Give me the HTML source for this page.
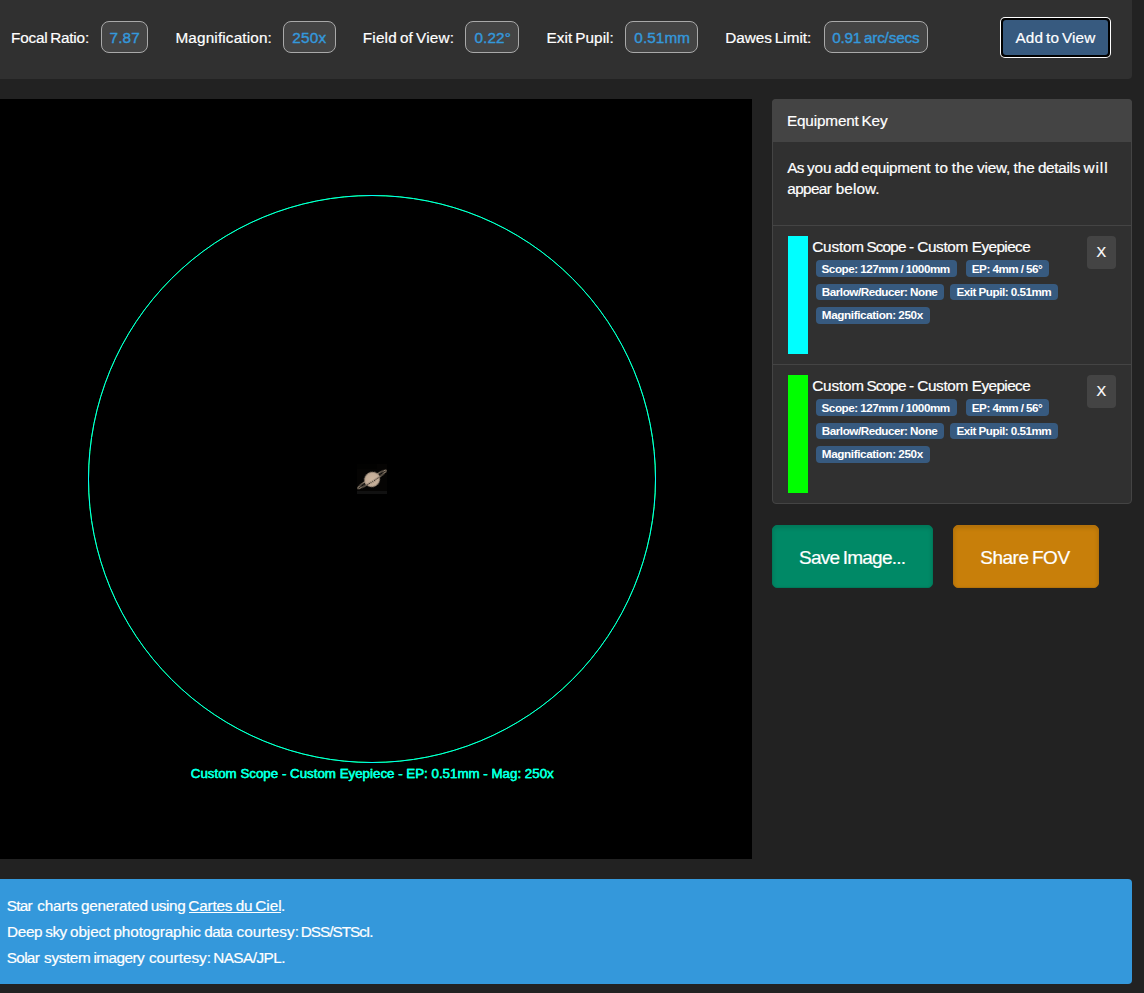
<!DOCTYPE html>
<html lang="en">
<head>
<meta charset="utf-8">
<title>Field of View Calculator</title>
<style>
html,body{margin:0;padding:0;}
body{width:1144px;height:993px;background:#222;position:relative;overflow:hidden;font-family:"Liberation Sans", sans-serif;}
.b{position:absolute;box-sizing:content-box;}
.t{position:absolute;white-space:nowrap;line-height:20px;word-spacing:-1.3px;-webkit-text-stroke:0.2px currentColor;}
svg{position:absolute;left:0;top:99px;}
</style>
</head>
<body>
<div class="b" style="left:0px;top:0px;width:1132px;height:79px;background:#303030;border-radius:0 0 4px 0;"></div>
<div class="b" style="left:101px;top:21px;width:45px;height:30px;background:#444;border:1px solid #a9a9a9;border-radius:8px;"></div>
<div class="b" style="left:283px;top:21px;width:51px;height:30px;background:#444;border:1px solid #a9a9a9;border-radius:8px;"></div>
<div class="b" style="left:465px;top:21px;width:52px;height:30px;background:#444;border:1px solid #a9a9a9;border-radius:8px;"></div>
<div class="b" style="left:625px;top:21px;width:71px;height:30px;background:#444;border:1px solid #a9a9a9;border-radius:8px;"></div>
<div class="b" style="left:824px;top:21px;width:102px;height:30px;background:#444;border:1px solid #a9a9a9;border-radius:8px;"></div>
<div class="b" style="left:1000px;top:17px;width:111px;height:41px;background:#fff;border-radius:5px;"></div>
<div class="b" style="left:1001px;top:18px;width:109px;height:39px;background:#000;border-radius:4px;"></div>
<div class="b" style="left:1003px;top:20px;width:105px;height:35px;background:#375a7f;border-radius:3px;"></div>
<div class="b" style="left:0px;top:99px;width:752px;height:760px;background:#000;"></div>
<div class="b" style="left:772px;top:99px;width:358px;height:403px;background:#303030;border:1px solid #444;border-radius:4px;"></div>
<div class="b" style="left:772px;top:99px;width:360px;height:43px;background:#444;border-radius:4px 4px 0 0;"></div>
<div class="b" style="left:773px;top:225px;width:358px;height:1px;background:#444;"></div>
<div class="b" style="left:773px;top:364px;width:358px;height:1px;background:#444;"></div>
<div class="b" style="left:788px;top:236px;width:20px;height:118px;background:#00ffff;"></div>
<div class="b" style="left:1087px;top:236px;width:29px;height:33px;background:#444;border-radius:4px;"></div>
<div class="b" style="left:816px;top:260px;width:141px;height:17px;background:#375a7f;border-radius:4px;"></div>
<div class="b" style="left:966px;top:260px;width:83px;height:17px;background:#375a7f;border-radius:4px;"></div>
<div class="b" style="left:816px;top:284px;width:128px;height:16px;background:#375a7f;border-radius:4px;"></div>
<div class="b" style="left:950px;top:284px;width:108px;height:16px;background:#375a7f;border-radius:4px;"></div>
<div class="b" style="left:816px;top:307px;width:114px;height:17px;background:#375a7f;border-radius:4px;"></div>
<div class="b" style="left:788px;top:375px;width:20px;height:118px;background:#00ff00;"></div>
<div class="b" style="left:1087px;top:375px;width:29px;height:33px;background:#444;border-radius:4px;"></div>
<div class="b" style="left:816px;top:399px;width:141px;height:17px;background:#375a7f;border-radius:4px;"></div>
<div class="b" style="left:966px;top:399px;width:83px;height:17px;background:#375a7f;border-radius:4px;"></div>
<div class="b" style="left:816px;top:423px;width:128px;height:16px;background:#375a7f;border-radius:4px;"></div>
<div class="b" style="left:950px;top:423px;width:108px;height:16px;background:#375a7f;border-radius:4px;"></div>
<div class="b" style="left:816px;top:446px;width:114px;height:17px;background:#375a7f;border-radius:4px;"></div>
<div class="b" style="left:772px;top:525px;width:159px;height:61px;background:#008966;border-radius:5px;border:1px solid #007a5a;box-shadow:inset 0 2px 4px rgba(0,0,0,.13);"></div>
<div class="b" style="left:953px;top:525px;width:144px;height:61px;background:#c87f0a;border-radius:5px;border:1px solid #b5720a;box-shadow:inset 0 2px 4px rgba(0,0,0,.13);"></div>
<div class="b" style="left:0px;top:879px;width:1132px;height:105px;background:#3498db;border-radius:0 4px 4px 0;"></div>
<div class="b" style="left:189px;top:912px;width:92px;height:1px;background:#fff;"></div>
<svg width="752" height="760" viewBox="0 0 752 760">
<defs>
<filter id="bl" x="-20%" y="-20%" width="140%" height="140%"><feGaussianBlur stdDeviation="0.42"/></filter>
<radialGradient id="pg" cx="50%" cy="50%" r="50%"><stop offset="0" stop-color="#cdb59e"/><stop offset="0.8" stop-color="#c3ac97"/><stop offset="1" stop-color="#a3917f"/></radialGradient>
<clipPath id="sc"><rect x="357" y="365" width="30" height="30"/></clipPath>
</defs>
<g fill="none" stroke-width="1">
<circle cx="372" cy="380" r="283.5" stroke="#00ff00"/>
<circle cx="372" cy="380" r="283.5" stroke="#00ffff"/>
</g>
<g font-family="'Liberation Sans', sans-serif" font-size="13.33" text-anchor="middle" stroke-width="0.3">
<text x="372.25" y="678.9" fill="#00ff00" stroke="#00ff00">Custom Scope - Custom Eyepiece - EP: 0.51mm - Mag: 250x</text>
<text x="372.25" y="678.9" fill="#00ffff" stroke="#00ffff">Custom Scope - Custom Eyepiece - EP: 0.51mm - Mag: 250x</text>
</g>
<rect x="357" y="365" width="30" height="30" fill="#050403"/>
<rect x="357" y="365" width="20" height="5" fill="#020201"/>
<rect x="357" y="391.9" width="30" height="3.1" fill="#111111"/>
<g clip-path="url(#sc)"><g filter="url(#bl)" transform="rotate(-32.3 372 380.3)">
<ellipse cx="372" cy="380.4" rx="17.3" ry="2.1" fill="#0c0907" stroke="#9f8f7c" stroke-width="0.95"/>
<ellipse cx="372" cy="380.5" rx="8.1" ry="7.5" fill="url(#pg)"/>
<path d="M364.6 382.3 A17.3 2.1 0 0 0 379.4 382.3" stroke="#0b0806" stroke-width="1.3" stroke-dasharray="1.2 0.9" fill="none"/>
<path d="M364.4 381.1 A17.3 2.1 0 0 0 379.6 381.1" stroke="#dcc4ab" stroke-width="0.8" fill="none" opacity="0.35"/>
</g></g>
</svg>

<span class="t" id="t0" style="left:10.99px;top:28.00px;font-size:15.3px;font-weight:400;color:#fff;letter-spacing:-0.197px;">Focal Ratio:</span>
<span class="t" id="t1" style="left:109.59px;top:28.00px;font-size:15.3px;font-weight:400;color:#3498db;letter-spacing:0.129px;-webkit-text-stroke-width:0.4px;">7.87</span>
<span class="t" id="t2" style="left:175.44px;top:28.00px;font-size:15.3px;font-weight:400;color:#fff;letter-spacing:0.158px;">Magnification:</span>
<span class="t" id="t3" style="left:292.22px;top:28.00px;font-size:15.3px;font-weight:400;color:#3498db;letter-spacing:0.263px;-webkit-text-stroke-width:0.4px;">250x</span>
<span class="t" id="t4" style="left:362.83px;top:28.00px;font-size:15.3px;font-weight:400;color:#fff;letter-spacing:0.163px;">Field of View:</span>
<span class="t" id="t5" style="left:474.45px;top:28.00px;font-size:15.3px;font-weight:400;color:#3498db;letter-spacing:0.114px;-webkit-text-stroke-width:0.4px;">0.22°</span>
<span class="t" id="t6" style="left:546.43px;top:28.00px;font-size:15.3px;font-weight:400;color:#fff;letter-spacing:0.068px;">Exit Pupil:</span>
<span class="t" id="t7" style="left:634.32px;top:28.00px;font-size:15.3px;font-weight:400;color:#3498db;letter-spacing:0.076px;-webkit-text-stroke-width:0.4px;">0.51mm</span>
<span class="t" id="t8" style="left:725.15px;top:28.00px;font-size:15.3px;font-weight:400;color:#fff;letter-spacing:-0.010px;">Dawes Limit:</span>
<span class="t" id="t9" style="left:832.19px;top:28.00px;font-size:15.3px;font-weight:400;color:#3498db;letter-spacing:-0.193px;-webkit-text-stroke-width:0.4px;">0.91 arc/secs</span>
<span class="t" id="t10" style="left:1015.49px;top:28.00px;font-size:15.3px;font-weight:400;color:#fff;letter-spacing:0.104px;">Add to View</span>
<span class="t" id="t11" style="left:786.98px;top:111.00px;font-size:15.3px;font-weight:400;color:#fff;letter-spacing:-0.154px;">Equipment Key</span>
<span class="t" id="t12" style="left:787.34px;top:158.00px;font-size:15.3px;font-weight:400;color:#fff;letter-spacing:-0.763px;">As</span>
<span class="t" id="t13" style="left:807.02px;top:158.00px;font-size:15.3px;font-weight:400;color:#fff;letter-spacing:-0.107px;">you</span>
<span class="t" id="t14" style="left:834.25px;top:158.00px;font-size:15.3px;font-weight:400;color:#fff;letter-spacing:-0.490px;">add</span>
<span class="t" id="t15" style="left:861.29px;top:158.00px;font-size:15.3px;font-weight:400;color:#fff;letter-spacing:-0.271px;">equipment</span>
<span class="t" id="t16" style="left:935.09px;top:158.00px;font-size:15.3px;font-weight:400;color:#fff;letter-spacing:0.226px;">to</span>
<span class="t" id="t17" style="left:951.76px;top:158.00px;font-size:15.3px;font-weight:400;color:#fff;letter-spacing:0.288px;">the</span>
<span class="t" id="t18" style="left:976.94px;top:158.00px;font-size:15.3px;font-weight:400;color:#fff;letter-spacing:-0.156px;">view,</span>
<span class="t" id="t19" style="left:1013.58px;top:158.00px;font-size:15.3px;font-weight:400;color:#fff;letter-spacing:0.001px;">the</span>
<span class="t" id="t20" style="left:1037.92px;top:158.00px;font-size:15.3px;font-weight:400;color:#fff;letter-spacing:-0.298px;">details</span>
<span class="t" id="t21" style="left:1083.54px;top:158.00px;font-size:15.3px;font-weight:400;color:#fff;letter-spacing:0.924px;">will</span>
<span class="t" id="t22" style="left:787.26px;top:179.00px;font-size:15.3px;font-weight:400;color:#fff;letter-spacing:-0.607px;">appear</span>
<span class="t" id="t23" style="left:835.82px;top:179.00px;font-size:15.3px;font-weight:400;color:#fff;letter-spacing:0.051px;">below.</span>
<span class="t" id="t24" style="left:812.18px;top:237.00px;font-size:15.3px;font-weight:400;color:#fff;letter-spacing:-0.153px;">Custom</span>
<span class="t" id="t25" style="left:866.39px;top:237.00px;font-size:15.3px;font-weight:400;color:#fff;letter-spacing:-0.824px;">Scope</span>
<span class="t" id="t26" style="left:908.98px;top:237.00px;font-size:15.3px;font-weight:400;color:#fff;letter-spacing:2.597px;">-</span>
<span class="t" id="t27" style="left:917.18px;top:237.00px;font-size:15.3px;font-weight:400;color:#fff;letter-spacing:-0.313px;">Custom</span>
<span class="t" id="t28" style="left:971.78px;top:237.00px;font-size:15.3px;font-weight:400;color:#fff;letter-spacing:-0.573px;">Eyepiece</span>
<span class="t" id="t29" style="left:1096.47px;top:242.00px;font-size:14.5px;font-weight:400;color:#fff;letter-spacing:4.514px;">X</span>
<span class="t" id="t30" style="left:821.57px;top:259.00px;font-size:11.7px;font-weight:700;color:#fff;letter-spacing:-0.490px;-webkit-text-stroke-width:0;word-spacing:-0.2px;">Scope: 127mm / 1000mm</span>
<span class="t" id="t31" style="left:971.82px;top:259.00px;font-size:11.7px;font-weight:700;color:#fff;letter-spacing:-0.489px;-webkit-text-stroke-width:0;word-spacing:-0.2px;">EP: 4mm / 56°</span>
<span class="t" id="t32" style="left:821.82px;top:282.00px;font-size:11.7px;font-weight:700;color:#fff;letter-spacing:-0.479px;-webkit-text-stroke-width:0;word-spacing:-0.2px;">Barlow/Reducer: None</span>
<span class="t" id="t33" style="left:956.48px;top:282.00px;font-size:11.7px;font-weight:700;color:#fff;letter-spacing:-0.484px;-webkit-text-stroke-width:0;word-spacing:-0.2px;">Exit Pupil: 0.51mm</span>
<span class="t" id="t34" style="left:821.82px;top:305.00px;font-size:11.7px;font-weight:700;color:#fff;letter-spacing:-0.381px;-webkit-text-stroke-width:0;word-spacing:-0.2px;">Magnification: 250x</span>
<span class="t" id="t35" style="left:812.18px;top:376.00px;font-size:15.3px;font-weight:400;color:#fff;letter-spacing:-0.153px;">Custom</span>
<span class="t" id="t36" style="left:866.39px;top:376.00px;font-size:15.3px;font-weight:400;color:#fff;letter-spacing:-0.824px;">Scope</span>
<span class="t" id="t37" style="left:908.98px;top:376.00px;font-size:15.3px;font-weight:400;color:#fff;letter-spacing:2.597px;">-</span>
<span class="t" id="t38" style="left:917.18px;top:376.00px;font-size:15.3px;font-weight:400;color:#fff;letter-spacing:-0.313px;">Custom</span>
<span class="t" id="t39" style="left:971.78px;top:376.00px;font-size:15.3px;font-weight:400;color:#fff;letter-spacing:-0.573px;">Eyepiece</span>
<span class="t" id="t40" style="left:1096.47px;top:381.00px;font-size:14.5px;font-weight:400;color:#fff;letter-spacing:4.514px;">X</span>
<span class="t" id="t41" style="left:821.57px;top:398.00px;font-size:11.7px;font-weight:700;color:#fff;letter-spacing:-0.490px;-webkit-text-stroke-width:0;word-spacing:-0.2px;">Scope: 127mm / 1000mm</span>
<span class="t" id="t42" style="left:971.82px;top:398.00px;font-size:11.7px;font-weight:700;color:#fff;letter-spacing:-0.489px;-webkit-text-stroke-width:0;word-spacing:-0.2px;">EP: 4mm / 56°</span>
<span class="t" id="t43" style="left:821.82px;top:421.00px;font-size:11.7px;font-weight:700;color:#fff;letter-spacing:-0.479px;-webkit-text-stroke-width:0;word-spacing:-0.2px;">Barlow/Reducer: None</span>
<span class="t" id="t44" style="left:956.48px;top:421.00px;font-size:11.7px;font-weight:700;color:#fff;letter-spacing:-0.484px;-webkit-text-stroke-width:0;word-spacing:-0.2px;">Exit Pupil: 0.51mm</span>
<span class="t" id="t45" style="left:821.82px;top:444.00px;font-size:11.7px;font-weight:700;color:#fff;letter-spacing:-0.381px;-webkit-text-stroke-width:0;word-spacing:-0.2px;">Magnification: 250x</span>
<span class="t" id="t46" style="left:799.10px;top:548.00px;font-size:19.0px;font-weight:400;color:#fff;letter-spacing:-0.742px;">Save Image...</span>
<span class="t" id="t47" style="left:980.31px;top:548.00px;font-size:19.0px;font-weight:400;color:#fff;letter-spacing:-0.494px;">Share FOV</span>
<span class="t" id="t48" style="left:6.84px;top:896.00px;font-size:15.3px;font-weight:400;color:#fff;letter-spacing:-0.742px;">Star</span>
<span class="t" id="t49" style="left:37.22px;top:896.00px;font-size:15.3px;font-weight:400;color:#fff;letter-spacing:-0.183px;">charts</span>
<span class="t" id="t50" style="left:81.08px;top:896.00px;font-size:15.3px;font-weight:400;color:#fff;letter-spacing:-0.255px;">generated</span>
<span class="t" id="t51" style="left:150.67px;top:896.00px;font-size:15.3px;font-weight:400;color:#fff;letter-spacing:-0.394px;">using</span>
<span class="t" id="t52" style="left:188.24px;top:896.00px;font-size:15.3px;font-weight:400;color:#fff;letter-spacing:-0.154px;">Cartes</span>
<span class="t" id="t53" style="left:235.66px;top:896.00px;font-size:15.3px;font-weight:400;color:#fff;letter-spacing:-0.202px;">du</span>
<span class="t" id="t54" style="left:255.30px;top:896.00px;font-size:15.3px;font-weight:400;color:#fff;letter-spacing:0.009px;">Ciel</span>
<span class="t" id="t55" style="left:281.03px;top:896.00px;font-size:15.3px;font-weight:400;color:#fff;letter-spacing:1.334px;">.</span>
<span class="t" id="t56" style="left:7.12px;top:922.00px;font-size:15.3px;font-weight:400;color:#fff;letter-spacing:-0.354px;">Deep</span>
<span class="t" id="t57" style="left:45.34px;top:922.00px;font-size:15.3px;font-weight:400;color:#fff;letter-spacing:-0.529px;">sky</span>
<span class="t" id="t58" style="left:70.06px;top:922.00px;font-size:15.3px;font-weight:400;color:#fff;letter-spacing:-0.099px;">object</span>
<span class="t" id="t59" style="left:113.44px;top:922.00px;font-size:15.3px;font-weight:400;color:#fff;letter-spacing:-0.092px;">photographic</span>
<span class="t" id="t60" style="left:204.27px;top:922.00px;font-size:15.3px;font-weight:400;color:#fff;letter-spacing:-0.497px;">data</span>
<span class="t" id="t61" style="left:236.59px;top:922.00px;font-size:15.3px;font-weight:400;color:#fff;letter-spacing:0.044px;">courtesy:</span>
<span class="t" id="t62" style="left:300.77px;top:922.00px;font-size:15.3px;font-weight:400;color:#fff;letter-spacing:-0.992px;">DSS/STScI.</span>
<span class="t" id="t63" style="left:6.84px;top:948.00px;font-size:15.3px;font-weight:400;color:#fff;letter-spacing:-0.697px;">Solar</span>
<span class="t" id="t64" style="left:44.10px;top:948.00px;font-size:15.3px;font-weight:400;color:#fff;letter-spacing:-0.357px;">system</span>
<span class="t" id="t65" style="left:93.45px;top:948.00px;font-size:15.3px;font-weight:400;color:#fff;letter-spacing:-0.537px;">imagery</span>
<span class="t" id="t66" style="left:148.91px;top:948.00px;font-size:15.3px;font-weight:400;color:#fff;letter-spacing:-0.005px;">courtesy:</span>
<span class="t" id="t67" style="left:213.14px;top:948.00px;font-size:15.3px;font-weight:400;color:#fff;letter-spacing:-0.531px;">NASA/JPL.</span>
</body>
</html>
